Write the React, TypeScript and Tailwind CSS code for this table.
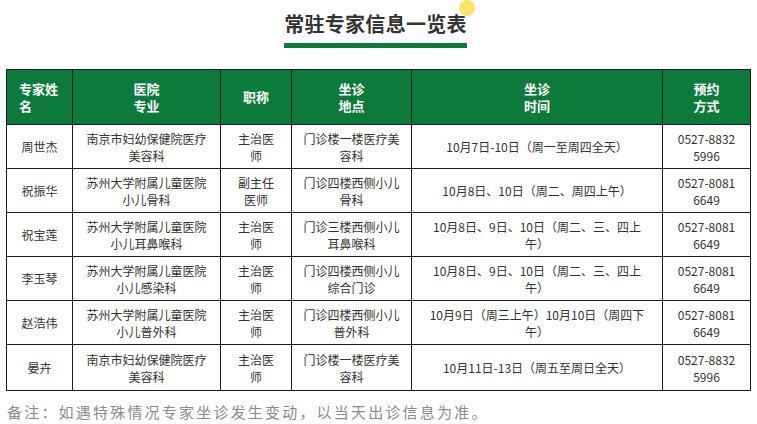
import React from "react";

type Row = {
  name: string;
  hosp: string[];
  title: string[];
  place: string[];
  time: string[];
  phone: string[];
  h: string;
};

const rows: Row[] = [
  {
    name: "周世杰",
    hosp: ["南京市妇幼保健院医疗", "美容科"],
    title: ["主治医", "师"],
    place: ["门诊楼一楼医疗美", "容科"],
    time: ["10月7日-10日（周一至周四全天）"],
    phone: ["0527-8832", "5996"],
    h: "h-[44px]",
  },
  {
    name: "祝振华",
    hosp: ["苏州大学附属儿童医院", "小儿骨科"],
    title: ["副主任", "医师"],
    place: ["门诊四楼西侧小儿", "骨科"],
    time: ["10月8日、10日（周二、周四上午）"],
    phone: ["0527-8081", "6649"],
    h: "h-[44px]",
  },
  {
    name: "祝宝莲",
    hosp: ["苏州大学附属儿童医院", "小儿耳鼻喉科"],
    title: ["主治医", "师"],
    place: ["门诊三楼西侧小儿", "耳鼻喉科"],
    time: ["10月8日、9日、10日（周二、三、四上", "午）"],
    phone: ["0527-8081", "6649"],
    h: "h-[44px]",
  },
  {
    name: "李玉琴",
    hosp: ["苏州大学附属儿童医院", "小儿感染科"],
    title: ["主治医", "师"],
    place: ["门诊四楼西侧小儿", "综合门诊"],
    time: ["10月8日、9日、10日（周二、三、四上", "午）"],
    phone: ["0527-8081", "6649"],
    h: "h-[44px]",
  },
  {
    name: "赵浩伟",
    hosp: ["苏州大学附属儿童医院", "小儿普外科"],
    title: ["主治医", "师"],
    place: ["门诊四楼西侧小儿", "普外科"],
    time: ["10月9日（周三上午）10月10日（周四下", "午）"],
    phone: ["0527-8081", "6649"],
    h: "h-[44px]",
  },
  {
    name: "晏卉",
    hosp: ["南京市妇幼保健院医疗", "美容科"],
    title: ["主治医", "师"],
    place: ["门诊楼一楼医疗美", "容科"],
    time: ["10月11日-13日（周五至周日全天）"],
    phone: ["0527-8832", "5996"],
    h: "h-[46px]",
  },
];

function Lines({ lines }: { lines: string[] }) {
  return (
    <>
      {lines.map((l, i) => (
        <div key={i} className="whitespace-nowrap">
          {l}
        </div>
      ))}
    </>
  );
}

const th =
  "border border-[#1c1c1c] bg-[#0b7a3b] text-white font-bold text-[13px] leading-[17.5px] text-center align-middle p-0";
const td =
  "border border-[#1c1c1c] text-[#333333] text-[12px] leading-[17px] text-center align-middle p-0";

export default function App() {
  return (
    <div
      className="w-[757px] h-[424px] bg-white overflow-hidden"
      style={{ fontFamily: '"Noto Sans CJK SC", "Noto Sans", sans-serif' }}
    >
      <div className="flex justify-center pt-[10px]">
        <div className="relative flex flex-col items-center ml-[-6px]">
          <div className="absolute right-[-8px] top-[-10px] w-[16px] h-[16px] rounded-full bg-[#fbe66a]" />
          <div className="relative text-[20px] leading-[28px] font-bold text-[#333333] tracking-[0.3px]">
            常驻专家信息一览表
          </div>
          <div className="mt-[5px] h-[5px] w-full bg-[#0b7a3b]" />
        </div>
      </div>

      <div className="mt-[21px] ml-[6px] w-[744px]">
        <table className="w-[744px] table-fixed border-collapse">
          <colgroup>
            <col className="w-[66px]" />
            <col className="w-[148px]" />
            <col className="w-[71px]" />
            <col className="w-[120px]" />
            <col className="w-[251px]" />
            <col className="w-[88px]" />
          </colgroup>
          <thead>
            <tr className="h-[55px]">
              <th className={th + " !text-left pl-[12px]"}>
                <Lines lines={["专家姓", "名"]} />
              </th>
              <th className={th}>
                <Lines lines={["医院", "专业"]} />
              </th>
              <th className={th}>职称</th>
              <th className={th}>
                <Lines lines={["坐诊", "地点"]} />
              </th>
              <th className={th}>
                <Lines lines={["坐诊", "时间"]} />
              </th>
              <th className={th}>
                <Lines lines={["预约", "方式"]} />
              </th>
            </tr>
          </thead>
          <tbody>
            {rows.map((r, i) => (
              <tr key={i} className={r.h}>
                <td className={td}>{r.name}</td>
                <td className={td}>
                  <Lines lines={r.hosp} />
                </td>
                <td className={td}>
                  <Lines lines={r.title} />
                </td>
                <td className={td}>
                  <Lines lines={r.place} />
                </td>
                <td className={td}>
                  <Lines lines={r.time} />
                </td>
                <td className={td}>
                  <Lines lines={r.phone} />
                </td>
              </tr>
            ))}
          </tbody>
        </table>
      </div>

      <div className="mt-[10px] ml-[7px] text-[15px] leading-[22px] tracking-[2.2px] text-[#8a8a8a] whitespace-nowrap">
        备注：如遇特殊情况专家坐诊发生变动，以当天出诊信息为准。
      </div>
    </div>
  );
}
